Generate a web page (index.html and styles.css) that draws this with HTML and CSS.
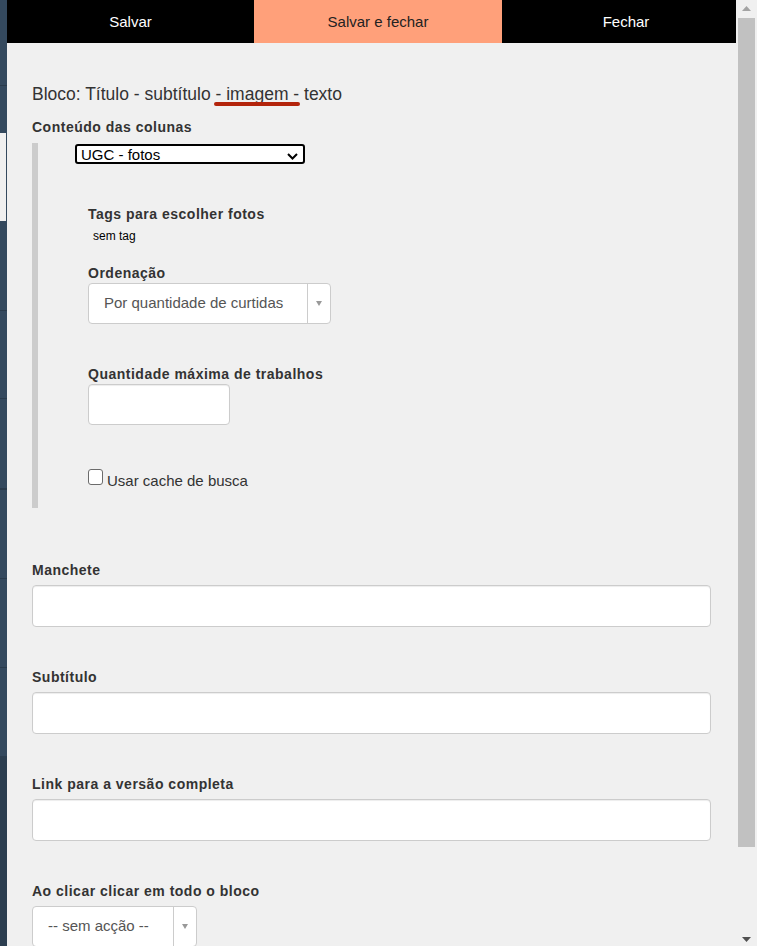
FILE: index.html
```html
<!DOCTYPE html>
<html lang="pt-BR">
<head>
<meta charset="utf-8">
<title>Bloco</title>
<link rel="stylesheet" href="styles.css">
</head>
<body>
<div class="app">
  <aside class="sidebar">
    <div class="sb-item sb-a"></div>
    <div class="sb-item sb-b"></div>
    <div class="sb-item sb-active"></div>
    <div class="sb-item sb-c"></div>
    <div class="sb-item sb-d"></div>
    <div class="sb-item sb-e"></div>
    <div class="sb-item sb-f"></div>
    <div class="sb-item sb-g"></div>
    <div class="sb-item sb-h"></div>
  </aside>

  <main class="panel">
    <div class="toolbar">
      <div class="tb-btn">Salvar</div>
      <div class="tb-btn tb-primary">Salvar e fechar</div>
      <div class="tb-btn">Fechar</div>
    </div>

    <div class="content">
      <h2 class="block-title">Bloco: Título - subtítulo <span class="hl">- imagem -</span> texto</h2>

      <span class="lbl cols-title">Conteúdo das colunas</span>
      <div class="cols-box">
        <div class="ugc-select">
          <span class="ugc-text">UGC - fotos</span>
          <svg class="chev" width="11" height="7" viewBox="0 0 11 7"><polyline points="1,1 5.5,5.5 10,1" fill="none" stroke="#000" stroke-width="2"/></svg>
        </div>

        <div class="sub">
          <span class="lbl tags-lbl">Tags para escolher fotos</span>
          <div class="tag-empty">sem tag</div>

          <span class="lbl order-lbl">Ordenação</span>
          <div class="select2 order-select">
            <span class="select2-text">Por quantidade de curtidas</span>
            <span class="select2-arrow"></span>
          </div>

          <span class="lbl qty-lbl">Quantidade máxima de trabalhos</span>
          <div class="form-control qty-input"></div>

          <div class="cache-row">
            <span class="checkbox"></span>
            <span class="cache-text">Usar cache de busca</span>
          </div>
        </div>
      </div>

      <div class="field first">
        <span class="lbl">Manchete</span>
        <div class="form-control"></div>
      </div>
      <div class="field">
        <span class="lbl">Subtítulo</span>
        <div class="form-control"></div>
      </div>
      <div class="field">
        <span class="lbl">Link para a versão completa</span>
        <div class="form-control"></div>
      </div>
      <div class="field">
        <span class="lbl">Ao clicar clicar em todo o bloco</span>
        <div class="select2 act-select">
          <span class="select2-text">-- sem acção --</span>
          <span class="select2-arrow"></span>
        </div>
      </div>
    </div>
  </main>

  <div class="scrollbar">
    <div class="sb-up"><svg width="9" height="5" viewBox="0 0 9 5"><polygon points="0,5 4.5,0 9,5" fill="#a3a3a3"/></svg></div>
    <div class="sb-thumb"></div>
    <div class="sb-track"></div>
    <div class="sb-down"><svg width="9" height="5" viewBox="0 0 9 5"><polygon points="0,0 9,0 4.5,5" fill="#505050"/></svg></div>
  </div>
</div>
</body>
</html>
```

FILE: styles.css
```css
body {
  margin: 0;
  font-family: "Liberation Sans", Arial, sans-serif;
  color: #333;
  background: #f0f0f0;
}

.app {
  display: flex;
  width: 757px;
  height: 946px;
  overflow: hidden;
}

/* left navigation strip */
.sidebar {
  flex: 0 0 7px;
  display: flex;
  flex-direction: column;
  background: #2c3e50;
}
.sb-item {
  flex: none;
  background: #34495e;
  border-bottom: 1px solid #2a3b4c;
}
.sb-a { height: 85px; }
.sb-b { height: 47px; border-bottom: 0; }
.sb-active {
  height: 88px;
  background: #f0f0f0;
  border-right: 1px solid #34495e;
  border-bottom: 0;
}
.sb-c { height: 89px; }
.sb-d { height: 87px; }
.sb-e { height: 89px; border-bottom-width: 2px; }
.sb-f { height: 88px; }
.sb-g { height: 88px; }
.sb-h { height: 88px; border-bottom: 0; }

/* main panel */
.panel {
  flex: 0 0 729px;
  overflow: hidden;
  background: #f0f0f0;
}

.toolbar {
  display: grid;
  grid-template-columns: 247px 248px 248px;
  width: 743px;
  height: 43px;
}
.tb-btn {
  display: flex;
  align-items: center;
  justify-content: center;
  font-size: 15px;
  color: #fff;
  background: #000;
}
.tb-primary {
  background: #ffa07a;
  color: #222;
}

.content {
  padding: 0 25px;
}

.block-title {
  margin: 40px 0 0;
  font-size: 17.5px;
  font-weight: normal;
  line-height: 22px;
  color: #333;
}
.hl {
  position: relative;
}
.hl::after {
  content: "";
  position: absolute;
  left: -2px;
  right: -1px;
  top: 18px;
  height: 4px;
  border-radius: 2px;
  background: #b3240c;
}

.lbl {
  display: block;
  padding-top: 2px;
  font-size: 14px;
  font-weight: bold;
  line-height: 20px;
  letter-spacing: 0.5px;
  color: #333;
}
.cols-title {
  margin-top: 10px;
}

.cols-box {
  margin-top: 6px;
  border-left: 6px solid #ccc;
  padding: 1px 0 19px 37px;
}

.ugc-select {
  box-sizing: border-box;
  width: 230px;
  height: 20px;
  border: 2px solid #000;
  border-radius: 3px;
  background: #fff;
  display: flex;
  align-items: center;
  justify-content: space-between;
  padding: 0 5px 0 4px;
  font-size: 15px;
  line-height: 16px;
  color: #000;
}
.ugc-text {
  padding-top: 1px;
}
.chev {
  margin-top: 4px;
}

.sub {
  margin-left: 13px;
}
.tags-lbl {
  margin-top: 38px;
}
.tag-empty {
  margin: 4px 0 0 5px;
  font-size: 12px;
  line-height: 16px;
  color: #000;
}
.order-lbl {
  margin-top: 17px;
}

.select2 {
  box-sizing: border-box;
  display: flex;
  height: 41px;
  background: #fff;
  border: 1px solid #ccc;
  border-radius: 4px;
}
.select2-text {
  flex: 1;
  padding: 8.5px 0 0 15px;
  font-size: 15px;
  line-height: 20px;
  color: #555;
  white-space: nowrap;
}
.select2-arrow {
  flex: 0 0 22px;
  border-left: 1px solid #ccc;
  display: flex;
  align-items: center;
  justify-content: center;
}
.select2-arrow::before {
  content: "";
  border-left: 3px solid transparent;
  border-right: 3px solid transparent;
  border-top: 5px solid #999;
}
.order-select {
  width: 243px;
}

.qty-lbl {
  margin-top: 38px;
}
.form-control {
  box-sizing: border-box;
  width: 100%;
  height: 42px;
  background: #fff;
  border: 1px solid #ccc;
  border-radius: 4px;
  box-shadow: inset 0 1px 1px rgba(0, 0, 0, 0.075);
}
.qty-input {
  width: 142px;
  height: 41px;
}

.cache-row {
  margin-top: 44px;
  display: flex;
  gap: 4px;
}
.checkbox {
  box-sizing: border-box;
  width: 15px;
  height: 16px;
  border: 1px solid #6b6b6b;
  border-radius: 3px;
  background: #fff;
}
.cache-text {
  margin-top: 3px;
  font-size: 15px;
  line-height: 17px;
  color: #333;
}

.field {
  margin-top: 38px;
}
.field.first {
  margin-top: 50px;
}
.field .lbl {
  margin-bottom: 5px;
}
.act-select {
  width: 165px;
  margin-top: 1px;
}

/* scrollbar */
.scrollbar {
  flex: 0 0 21px;
  box-sizing: border-box;
  padding: 0 2px;
  background: #f0f0f0;
  display: flex;
  flex-direction: column;
}
.sb-up {
  box-sizing: border-box;
  height: 18px;
  padding-top: 6px;
  display: flex;
  justify-content: center;
  align-items: flex-start;
}
.sb-thumb {
  height: 829px;
  background: #c1c1c1;
}
.sb-track {
  flex: 1;
}
.sb-down {
  box-sizing: border-box;
  height: 18px;
  padding-bottom: 4px;
  display: flex;
  justify-content: center;
  align-items: flex-end;
}
```
